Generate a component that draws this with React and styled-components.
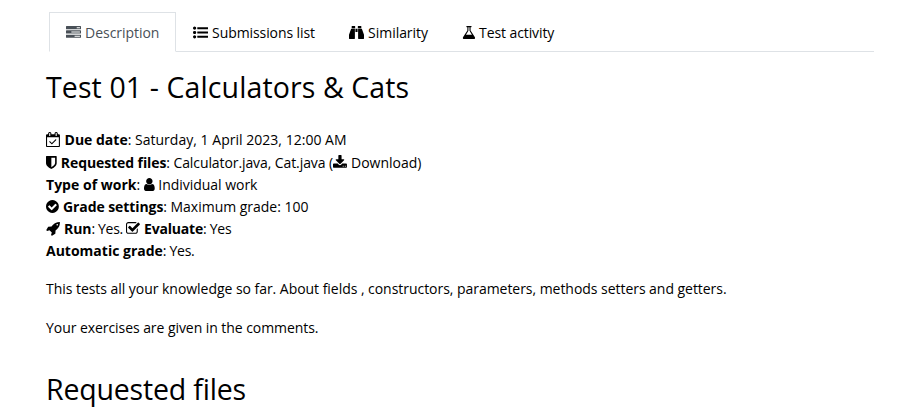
import React from 'react';
import styled, { createGlobalStyle } from 'styled-components';

const GlobalStyle = createGlobalStyle`
  body { margin: 0; background: #fff; overflow: hidden; }
`;

const Page = styled.main`
  box-sizing: border-box;
  width: 920px;
  height: 420px;
  overflow: hidden;
  padding: 12px 46px 0;
  font-family: 'Open Sans', 'Noto Sans', sans-serif;
  font-size: 14px;
  line-height: 22.2px;
  color: #000;
`;

const Tabs = styled.nav`
  display: flex;
  margin-left: 3px;
  height: 39px;
  border-bottom: 1px solid #dee2e6;
`;

const Tab = styled.a`
  box-sizing: border-box;
  height: 40px;
  width: ${(p) => p.$width}px;
  padding: 9px 0 0 16px;
  border: 1px solid ${(p) => (p.$active ? '#dee2e6' : 'transparent')};
  border-bottom-color: ${(p) => (p.$active ? '#fff' : 'transparent')};
  color: ${(p) => (p.$active ? '#495057' : '#000')};
  letter-spacing: ${(p) => p.$track || 0}px;
  white-space: nowrap;
`;

const Heading = styled.h2`
  margin: ${(p) => p.$top}px 0 0;
  font-size: 28.5px;
  line-height: 36px;
  font-weight: 400;
  letter-spacing: ${(p) => p.$track || 0}px;
`;

const Details = styled.section`
  margin-top: 24.9px;
`;

const Line = styled.div`
  height: 22.2px;
  white-space: nowrap;
`;

const Text = styled.span`
  letter-spacing: ${(p) => p.$track || 0}px;
`;

const Label = styled.b`
  font-weight: 700;
  letter-spacing: ${(p) => p.$track || 0}px;
`;

const Paragraph = styled.p`
  margin: ${(p) => p.$top}px 0 0;
  letter-spacing: ${(p) => p.$track || 0}px;
  white-space: nowrap;
`;

const Glyph = styled.svg`
  display: inline-block;
  height: 15px;
  width: ${(p) => p.$width}px;
  margin-right: ${(p) => p.$gap}px;
  vertical-align: -2px;
  fill: currentColor;
`;

// [left edge, advance width, outline] on a 1792-unit em
const icons = {
  tasks: [0, 1792, 'M1024 1408h640v-128h-640v128zm-384-512h1024v-128h-1024v128zm640-512h384v-128h-384v128zm512 832v256q0 26-19 45t-45 19h-1664q-26 0-45-19t-19-45v-256q0-26 19-45t45-19h1664q26 0 45 19t19 45zm0-512v256q0 26-19 45t-45 19h-1664q-26 0-45-19t-19-45v-256q0-26 19-45t45-19h1664q26 0 45 19t19 45zm0-512v256q0 26-19 45t-45 19h-1664q-26 0-45-19t-19-45v-256q0-26 19-45t45-19h1664q26 0 45 19t19 45z'],
  list: [0, 1792, 'M384 1408q0 80-56 136t-136 56-136-56-56-136 56-136 136-56 136 56 56 136zm0-512q0 80-56 136t-136 56-136-56-56-136 56-136 136-56 136 56 56 136zm1408 416v192q0 13-9.5 22.5t-22.5 9.5h-1216q-13 0-22.5-9.5t-9.5-22.5v-192q0-13 9.5-22.5t22.5-9.5h1216q13 0 22.5 9.5t9.5 22.5zm-1408-928q0 80-56 136t-136 56-136-56-56-136 56-136 136-56 136 56 56 136zm1408 416v192q0 13-9.5 22.5t-22.5 9.5h-1216q-13 0-22.5-9.5t-9.5-22.5v-192q0-13 9.5-22.5t22.5-9.5h1216q13 0 22.5 9.5t9.5 22.5zm0-512v192q0 13-9.5 22.5t-22.5 9.5h-1216q-13 0-22.5-9.5t-9.5-22.5v-192q0-13 9.5-22.5t22.5-9.5h1216q13 0 22.5 9.5t9.5 22.5z'],
  binoculars: [0, 1792, 'M704 448v1152q0 26-19 45t-45 19h-576q-26 0-45-19t-19-45v-448l246-670q12-34 50-34zM1024 832h-256v-384h256v384zM1792 1152v448q0 26-19 45t-45 19h-576q-26 0-45-19t-19-45v-1152h408q38 0 50 34zM736 160v224h-416v-224q0-32 32-32h352q32 0 32 32zM1472 160v224h-416v-224q0-32 32-32h352q32 0 32 32z'],
  flask: [64, 1664, 'M1591 1448q56 89 21.5 152.5t-140.5 63.5h-1152q-106 0-140.5-63.5t21.5-152.5l503-793v-399h-64q-26 0-45-19t-19-45 19-45 45-19h512q26 0 45 19t19 45-19 45-45 19h-64v399zm-779-725l-272 429h712l-272-429-20-31v-436h-128v436z'],
  calendar: [64, 1664, 'M1303 964l-512 512q-10 9-23 9t-23-9l-288-288q-9-10-9-23t9-22l46-46q9-9 22-9t23 9l220 220 444-444q10-9 23-9t22 9l46 46q9 9 9 22t-9 23zm-1111 700h1408v-1024h-1408v1024zm384-1216v-288q0-14-9-23t-23-9h-64q-14 0-23 9t-9 23v288q0 14 9 23t23 9h64q14 0 23-9t9-23zm768 0v-288q0-14-9-23t-23-9h-64q-14 0-23 9t-9 23v288q0 14 9 23t23 9h64q14 0 23-9t9-23zm384-64v1280q0 52-38 90t-90 38h-1408q-52 0-90-38t-38-90v-1280q0-52 38-90t90-38h128v-96q0-66 47-113t113-47h64q66 0 113 47t47 113v96h384v-96q0-66 47-113t113-47h64q66 0 113 47t47 113v96h128q52 0 90 38t38 90z'],
  shield: [256, 1280, 'M1344 960v-640h-448v1137q119-63 213-137 235-184 235-360zm192-768v768q0 86-33.5 170.5t-83 150-118 127.5-126.5 103-121 77.5-89.5 49.5-42.5 20q-12 6-26 6t-26-6q-16-7-42.5-20t-89.5-49.5-121-77.5-126.5-103-118-127.5-83-150-33.5-170.5v-768q0-26 19-45t45-19h1152q26 0 45 19t19 45z'],
  download: [64, 1664, 'M1344 1344q0-26-19-45t-45-19-45 19-19 45 19 45 45 19 45-19 19-45zm256 0q0-26-19-45t-45-19-45 19-19 45 19 45 45 19 45-19 19-45zm128-224v320q0 40-28 68t-68 28h-1472q-40 0-68-28t-28-68v-320q0-40 28-68t68-28h465l135 136q58 56 136 56t136-56l136-136h464q40 0 68 28t28 68zm-325-569q17 41-14 70l-448 448q-18 19-45 19t-45-19l-448-448q-31-29-14-70 17-39 59-39h256v-448q0-26 19-45t45-19h256q26 0 45 19t19 45v448h256q42 0 59 39z'],
  user: [256, 1280, 'M1536 1399q0 109-62.5 187t-150.5 78h-854q-88 0-150.5-78t-62.5-187q0-85 8.5-160.5t31.5-152 58.5-131 94-89 134.5-34.5q131 128 313 128t313-128q76 0 134.5 34.5t94 89 58.5 131 31.5 152 8.5 160.5zm-256-887q0 159-112.5 271.5t-271.5 112.5-271.5-112.5-112.5-271.5 112.5-271.5 271.5-112.5 271.5 112.5 112.5 271.5z'],
  checkCircle: [128, 1536, 'M1412 734q0-28-18-46l-91-90q-19-19-45-19t-45 19l-408 407-226-226q-19-19-45-19t-45 19l-91 90q-18 18-18 46 0 27 18 45l362 362q19 19 45 19 27 0 46-19l543-543q18-18 18-45zm252 162q0 209-103 385.5t-279.5 279.5-385.5 103-385.5-103-279.5-279.5-103-385.5 103-385.5 279.5-279.5 385.5-103 385.5 103 279.5 279.5 103 385.5z'],
  rocket: [0, 1664, 'M1440 448q0-40-28-68t-68-28-68 28-28 68 28 68 68 28 68-28 28-68zm224-288q0 249-75.5 430.5t-253.5 360.5q-81 80-195 176l-20 379q-2 16-16 26l-384 224q-7 4-16 4-12 0-23-9l-64-64q-13-14-8-32l85-276-281-281-276 85q-3 1-9 1-14 0-23-9l-64-64q-17-19-5-39l224-384q10-14 26-16l379-20q96-114 176-195 188-187 358-258t431-71q14 0 24 9.5t10 22.5z'],
  checkSquare: [64, 1664, 'M1472 930v318q0 119-84.5 203.5t-203.5 84.5h-832q-119 0-203.5-84.5t-84.5-203.5v-832q0-119 84.5-203.5t203.5-84.5h832q63 0 117 25 15 7 18 23 3 17-9 29l-49 49q-10 10-23 10-3 0-9-2-23-6-45-6h-832q-66 0-113 47t-47 113v832q0 66 47 113t113 47h832q66 0 113-47t47-113v-254q0-13 9-22l64-64q10-10 23-10 6 0 12 3 20 8 20 29zm231-489l-814 814q-24 24-57 24t-57-24l-430-430q-24-24-24-57t24-57l110-110q24-24 57-24t57 24l263 263 647-647q24-24 57-24t57 24l110 110q24 24 24 57t-24 57z'],
};

function Icon({ name, gap = 4.1 }) {
  const [left, width, d] = icons[name];
  return (
    <Glyph viewBox={`${left} 0 ${width} 1792`} $width={(width / 1792) * 15} $gap={gap} aria-hidden="true">
      <path d={d} />
    </Glyph>
  );
}

export default function App() {
  return (
    <>
      <GlobalStyle />
      <Page>
        <Tabs>
          <Tab $active $width={127} $track={-0.05}><Icon name="tasks" />Description</Tab>
          <Tab $width={156} $track={-0.09}><Icon name="list" />Submissions list</Tab>
          <Tab $width={112.5} $track={-0.04}><Icon name="binoculars" />Similarity</Tab>
          <Tab $width={127} $track={-0.1}><Icon name="flask" gap={3.7} />Test activity</Tab>
        </Tabs>
        <Heading $top={16.5} $track={0.11}>Test 01 - Calculators &amp; Cats</Heading>
        <Details>
          <Line>
            <Icon name="calendar" gap={4.6} />
            <Label>Due date</Label><Text $track={0.02}>: Saturday, 1 April 2023, 12:00 AM</Text>
          </Line>
          <Line>
            <Icon name="shield" />
            <Label $track={-0.09}>Requested files</Label><Text $track={-0.09}>: Calculator.java, Cat.java (</Text>
            <Icon name="download" />
            <Text>Download)</Text>
          </Line>
          <Line>
            <Label $track={0.02}>Type of work</Label><Text>: </Text>
            <Icon name="user" gap={3.8} />
            <Text $track={-0.03}>Individual work</Text>
          </Line>
          <Line>
            <Icon name="checkCircle" />
            <Label $track={-0.08}>Grade settings</Label><Text $track={-0.02}>: Maximum grade: 100</Text>
          </Line>
          <Line>
            <Icon name="rocket" />
            <Label $track={-0.1}>Run</Label><Text $track={-0.3}>: Yes. </Text>
            <Icon name="checkSquare" gap={3.8} />
            <Label $track={-0.18}>Evaluate</Label><Text $track={-0.3}>: Yes</Text>
          </Line>
          <Line>
            <Label>Automatic grade</Label><Text $track={-0.3}>: Yes.</Text>
          </Line>
        </Details>
        <Paragraph $top={15.6} $track={-0.04}>This tests all your knowledge so far. About fields , constructors, parameters, methods setters and getters.</Paragraph>
        <Paragraph $top={16.6} $track={-0.06}>Your exercises are given in the comments.</Paragraph>
        <Heading $top={31.9} $track={-0.18}>Requested files</Heading>
      </Page>
    </>
  );
}
